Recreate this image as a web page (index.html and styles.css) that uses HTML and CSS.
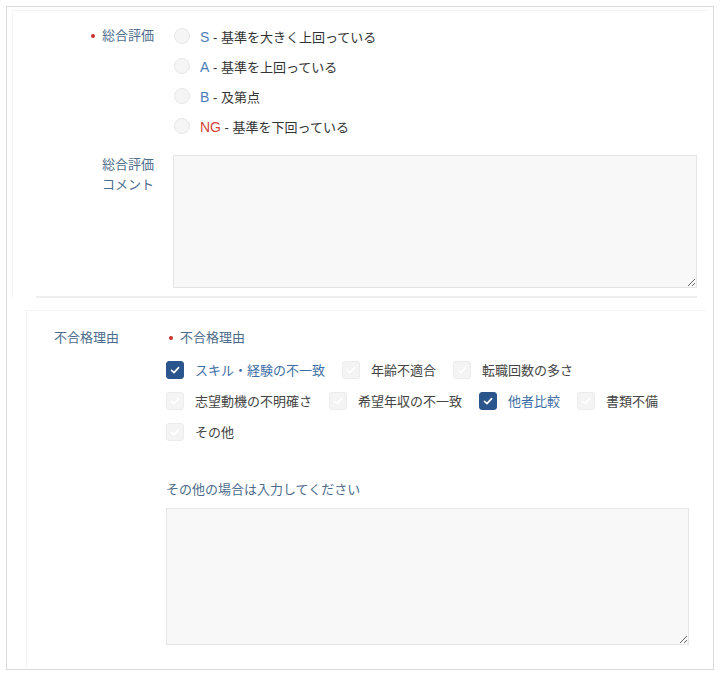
FILE: index.html
```html
<!DOCTYPE html>
<html lang="ja">
<head>
<meta charset="utf-8">
<title>評価フォーム</title>
<link rel="stylesheet" href="styles.css">
</head>
<body>
<div class="frame">
  <div class="panel1">
    <div class="field">
      <div class="label label-rows"><span class="req"></span>総合評価</div>
      <div class="control">
        <div class="radio-row"><span class="radio"></span><span class="opt"><span class="grade blue">S</span> - 基準を大きく上回っている</span></div>
        <div class="radio-row"><span class="radio"></span><span class="opt"><span class="grade blue">A</span> - 基準を上回っている</span></div>
        <div class="radio-row"><span class="radio"></span><span class="opt"><span class="grade blue">B</span> - 及第点</span></div>
        <div class="radio-row"><span class="radio"></span><span class="opt"><span class="grade red">NG</span> - 基準を下回っている</span></div>
      </div>
    </div>
    <div class="field comment-field">
      <div class="label label-lines">総合評価<br>コメント</div>
      <div class="control">
        <textarea class="ta ta1"></textarea>
      </div>
    </div>
    <div class="sep"></div>
  </div>
  <div class="panel2">
    <div class="field">
      <div class="label2">不合格理由</div>
      <div class="control2">
        <div class="sub-label"><span class="req req2"></span>不合格理由</div>
        <div class="checks">
          <div class="chk-item on"><span class="box"><svg viewBox="0 0 18 18" width="18" height="18"><path d="M5.5 9.3 L8 11.6 L12.6 6.6" fill="none" stroke="#fff" stroke-width="1.6" stroke-linecap="round" stroke-linejoin="round"/></svg></span><span class="chk-text">スキル・経験の不一致</span></div>
          <div class="chk-item"><span class="box"><svg viewBox="0 0 18 18" width="18" height="18"><path d="M5.5 9.3 L8 11.6 L12.6 6.6" fill="none" stroke="#fff" stroke-width="1.6" stroke-linecap="round" stroke-linejoin="round"/></svg></span><span class="chk-text">年齢不適合</span></div>
          <div class="chk-item"><span class="box"><svg viewBox="0 0 18 18" width="18" height="18"><path d="M5.5 9.3 L8 11.6 L12.6 6.6" fill="none" stroke="#fff" stroke-width="1.6" stroke-linecap="round" stroke-linejoin="round"/></svg></span><span class="chk-text">転職回数の多さ</span></div>
          <div class="chk-item"><span class="box"><svg viewBox="0 0 18 18" width="18" height="18"><path d="M5.5 9.3 L8 11.6 L12.6 6.6" fill="none" stroke="#fff" stroke-width="1.6" stroke-linecap="round" stroke-linejoin="round"/></svg></span><span class="chk-text">志望動機の不明確さ</span></div>
          <div class="chk-item"><span class="box"><svg viewBox="0 0 18 18" width="18" height="18"><path d="M5.5 9.3 L8 11.6 L12.6 6.6" fill="none" stroke="#fff" stroke-width="1.6" stroke-linecap="round" stroke-linejoin="round"/></svg></span><span class="chk-text">希望年収の不一致</span></div>
          <div class="chk-item on"><span class="box"><svg viewBox="0 0 18 18" width="18" height="18"><path d="M5.5 9.3 L8 11.6 L12.6 6.6" fill="none" stroke="#fff" stroke-width="1.6" stroke-linecap="round" stroke-linejoin="round"/></svg></span><span class="chk-text">他者比較</span></div>
          <div class="chk-item"><span class="box"><svg viewBox="0 0 18 18" width="18" height="18"><path d="M5.5 9.3 L8 11.6 L12.6 6.6" fill="none" stroke="#fff" stroke-width="1.6" stroke-linecap="round" stroke-linejoin="round"/></svg></span><span class="chk-text">書類不備</span></div>
          <div class="chk-item"><span class="box"><svg viewBox="0 0 18 18" width="18" height="18"><path d="M5.5 9.3 L8 11.6 L12.6 6.6" fill="none" stroke="#fff" stroke-width="1.6" stroke-linecap="round" stroke-linejoin="round"/></svg></span><span class="chk-text">その他</span></div>
        </div>
        <div class="other-label">その他の場合は入力してください</div>
        <textarea class="ta ta2"></textarea>
      </div>
    </div>
  </div>
</div>
</body>
</html>
```

FILE: styles.css
```css
html, body {
  margin: 0;
  padding: 0;
  background: #fff;
}
body {
  font-family: "Liberation Sans", "Noto Sans CJK JP", sans-serif;
  font-size: 13px;
  color: #3a3a3a;
}
.frame {
  margin: 6px;
  border: 1px solid #dcdcdc;
  height: 662px;
  overflow: hidden;
}
.panel1 {
  margin: 3px 5px 0 5px;
  border-top: 1px solid #f5f5f5;
  border-left: 1px solid #f5f5f5;
  padding: 10px 11px 0 0;
}
.field {
  display: flex;
}
.label {
  width: 141px;
  flex: none;
  text-align: right;
  color: #4d6c8c;
  margin-right: 19px;
}
.label-rows {
  line-height: 30px;
  display: flex;
  align-items: center;
  justify-content: flex-end;
  height: 30px;
}
.label-lines {
  line-height: 20px;
}
.req {
  display: inline-block;
  width: 4px;
  height: 4px;
  border-radius: 50%;
  background: #c8302a;
  margin-right: 7px;
}
.control {
  flex: 1;
}
.radio-row {
  height: 30px;
  display: flex;
  align-items: center;
}
.radio {
  width: 16px;
  height: 16px;
  box-sizing: border-box;
  border-radius: 50%;
  background: #f5f5f5;
  border: 1px solid #e8e8e8;
  margin-left: 1px;
  margin-right: 10px;
  flex: none;
}
.opt {
  color: #333;
}
.grade {
  font-size: 14px;
}
.blue {
  color: #4a7cb8;
}
.red {
  color: #d5443a;
}
.comment-field {
  margin-top: 14px;
}
.ta {
  display: block;
  box-sizing: border-box;
  background: #f8f8f8;
  border: 1px solid #e5e5e5;
  border-radius: 0;
  margin: 0;
  padding: 4px;
  font-family: inherit;
  outline: none;
}
.ta1 {
  width: 524px;
  height: 133px;
}
.sep {
  margin: 8px 0 0 23px;
  height: 2px;
  background: #eeeeee;
}
.panel2 {
  margin: 12px 7px 0 19px;
  border-top: 1px solid #f5f5f5;
  border-left: 1px solid #f3f3f3;
  padding: 17px 0 0 27px;
  height: 340px;
}
.label2 {
  width: 112px;
  flex: none;
  line-height: 20px;
  color: #4d6c8c;
}
.control2 {
  width: 523px;
}
.sub-label {
  line-height: 20px;
  color: #4d6c8c;
  display: flex;
  align-items: center;
}
.req2 {
  margin-left: 3px;
  margin-right: 7px;
}
.checks {
  margin-top: 6px;
  display: flex;
  flex-wrap: wrap;
  column-gap: 17px;
}
.chk-item {
  height: 31px;
  display: flex;
  align-items: center;
}
.box {
  width: 18px;
  height: 18px;
  box-sizing: border-box;
  border-radius: 3px;
  background: #f4f4f4;
  border: 1px solid #ececec;
  margin-right: 11px;
  display: flex;
  align-items: center;
  justify-content: center;
  flex: none;
  overflow: hidden;
}
.box svg {
  display: block;
  flex: none;
}
.chk-item.on .box {
  background: #2b568d;
  border-color: #2b568d;
}
.chk-text {
  color: #444;
}
.chk-item.on .chk-text {
  color: #3d6ea6;
}
.other-label {
  margin-top: 33px;
  line-height: 20px;
  color: #4d6c8c;
}
.ta2 {
  margin-top: 8px;
  width: 523px;
  height: 137px;
}
```
